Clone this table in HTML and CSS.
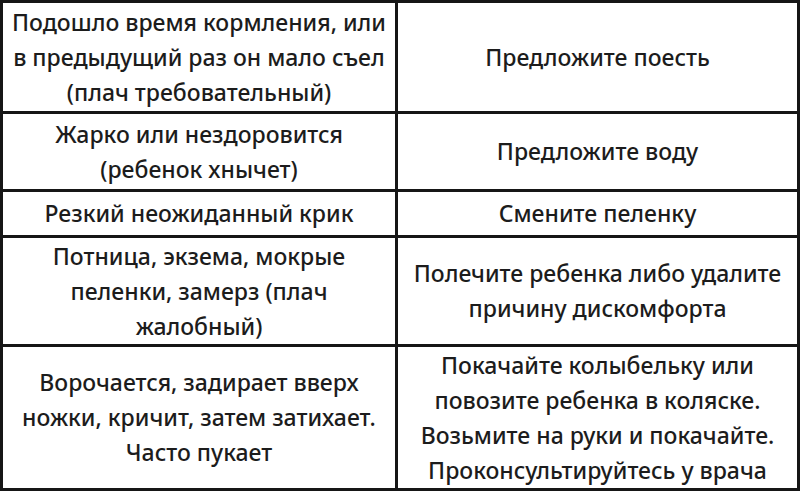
FILE: index.html
```html
<!DOCTYPE html>
<html lang="ru">
<head>
<meta charset="utf-8">
<link rel="stylesheet" href="styles.css">
</head>
<body>
<div class="table">
  <div class="cell r1">Подошло время кормления, или<br>в предыдущий раз он мало съел<br>(плач требовательный)</div>
  <div class="cell r1">Предложите поесть</div>
  <div class="cell r2">Жарко или нездоровится<br>(ребенок хнычет)</div>
  <div class="cell r2">Предложите воду</div>
  <div class="cell r3">Резкий неожиданный крик</div>
  <div class="cell r3">Смените пеленку</div>
  <div class="cell r4">Потница, экзема, мокрые<br>пеленки, замерз (плач<br>жалобный)</div>
  <div class="cell r4">Полечите ребенка либо удалите<br>причину дискомфорта</div>
  <div class="cell r5">Ворочается, задирает вверх<br>ножки, кричит, затем затихает.<br>Часто пукает</div>
  <div class="cell r5">Покачайте колыбельку или<br>повозите ребенка в коляске.<br>Возьмите на руки и покачайте.<br>Проконсультируйтесь у врача</div>
</div>
</body>
</html>
```
FILE: styles.css
```css
html, body {
  margin: 0;
  padding: 0;
  background: #fff;
}
.table {
  width: 800px;
  height: 491px;
  box-sizing: border-box;
  display: grid;
  grid-template-columns: 395px 402px;
  grid-template-rows: 111px 78px 46px 109px 144px;
  border-top: 3px solid #161616;
  border-left: 3px solid #161616;
  font-family: "Noto Sans", sans-serif;
  font-size: 23px;
  font-weight: 500;
  line-height: 35px;
  color: #1c1c1c;
}
.cell {
  box-sizing: border-box;
  border-right: 3px solid #161616;
  border-bottom: 3px solid #161616;
  display: flex;
  align-items: center;
  justify-content: center;
  text-align: center;
  white-space: nowrap;
}
```
